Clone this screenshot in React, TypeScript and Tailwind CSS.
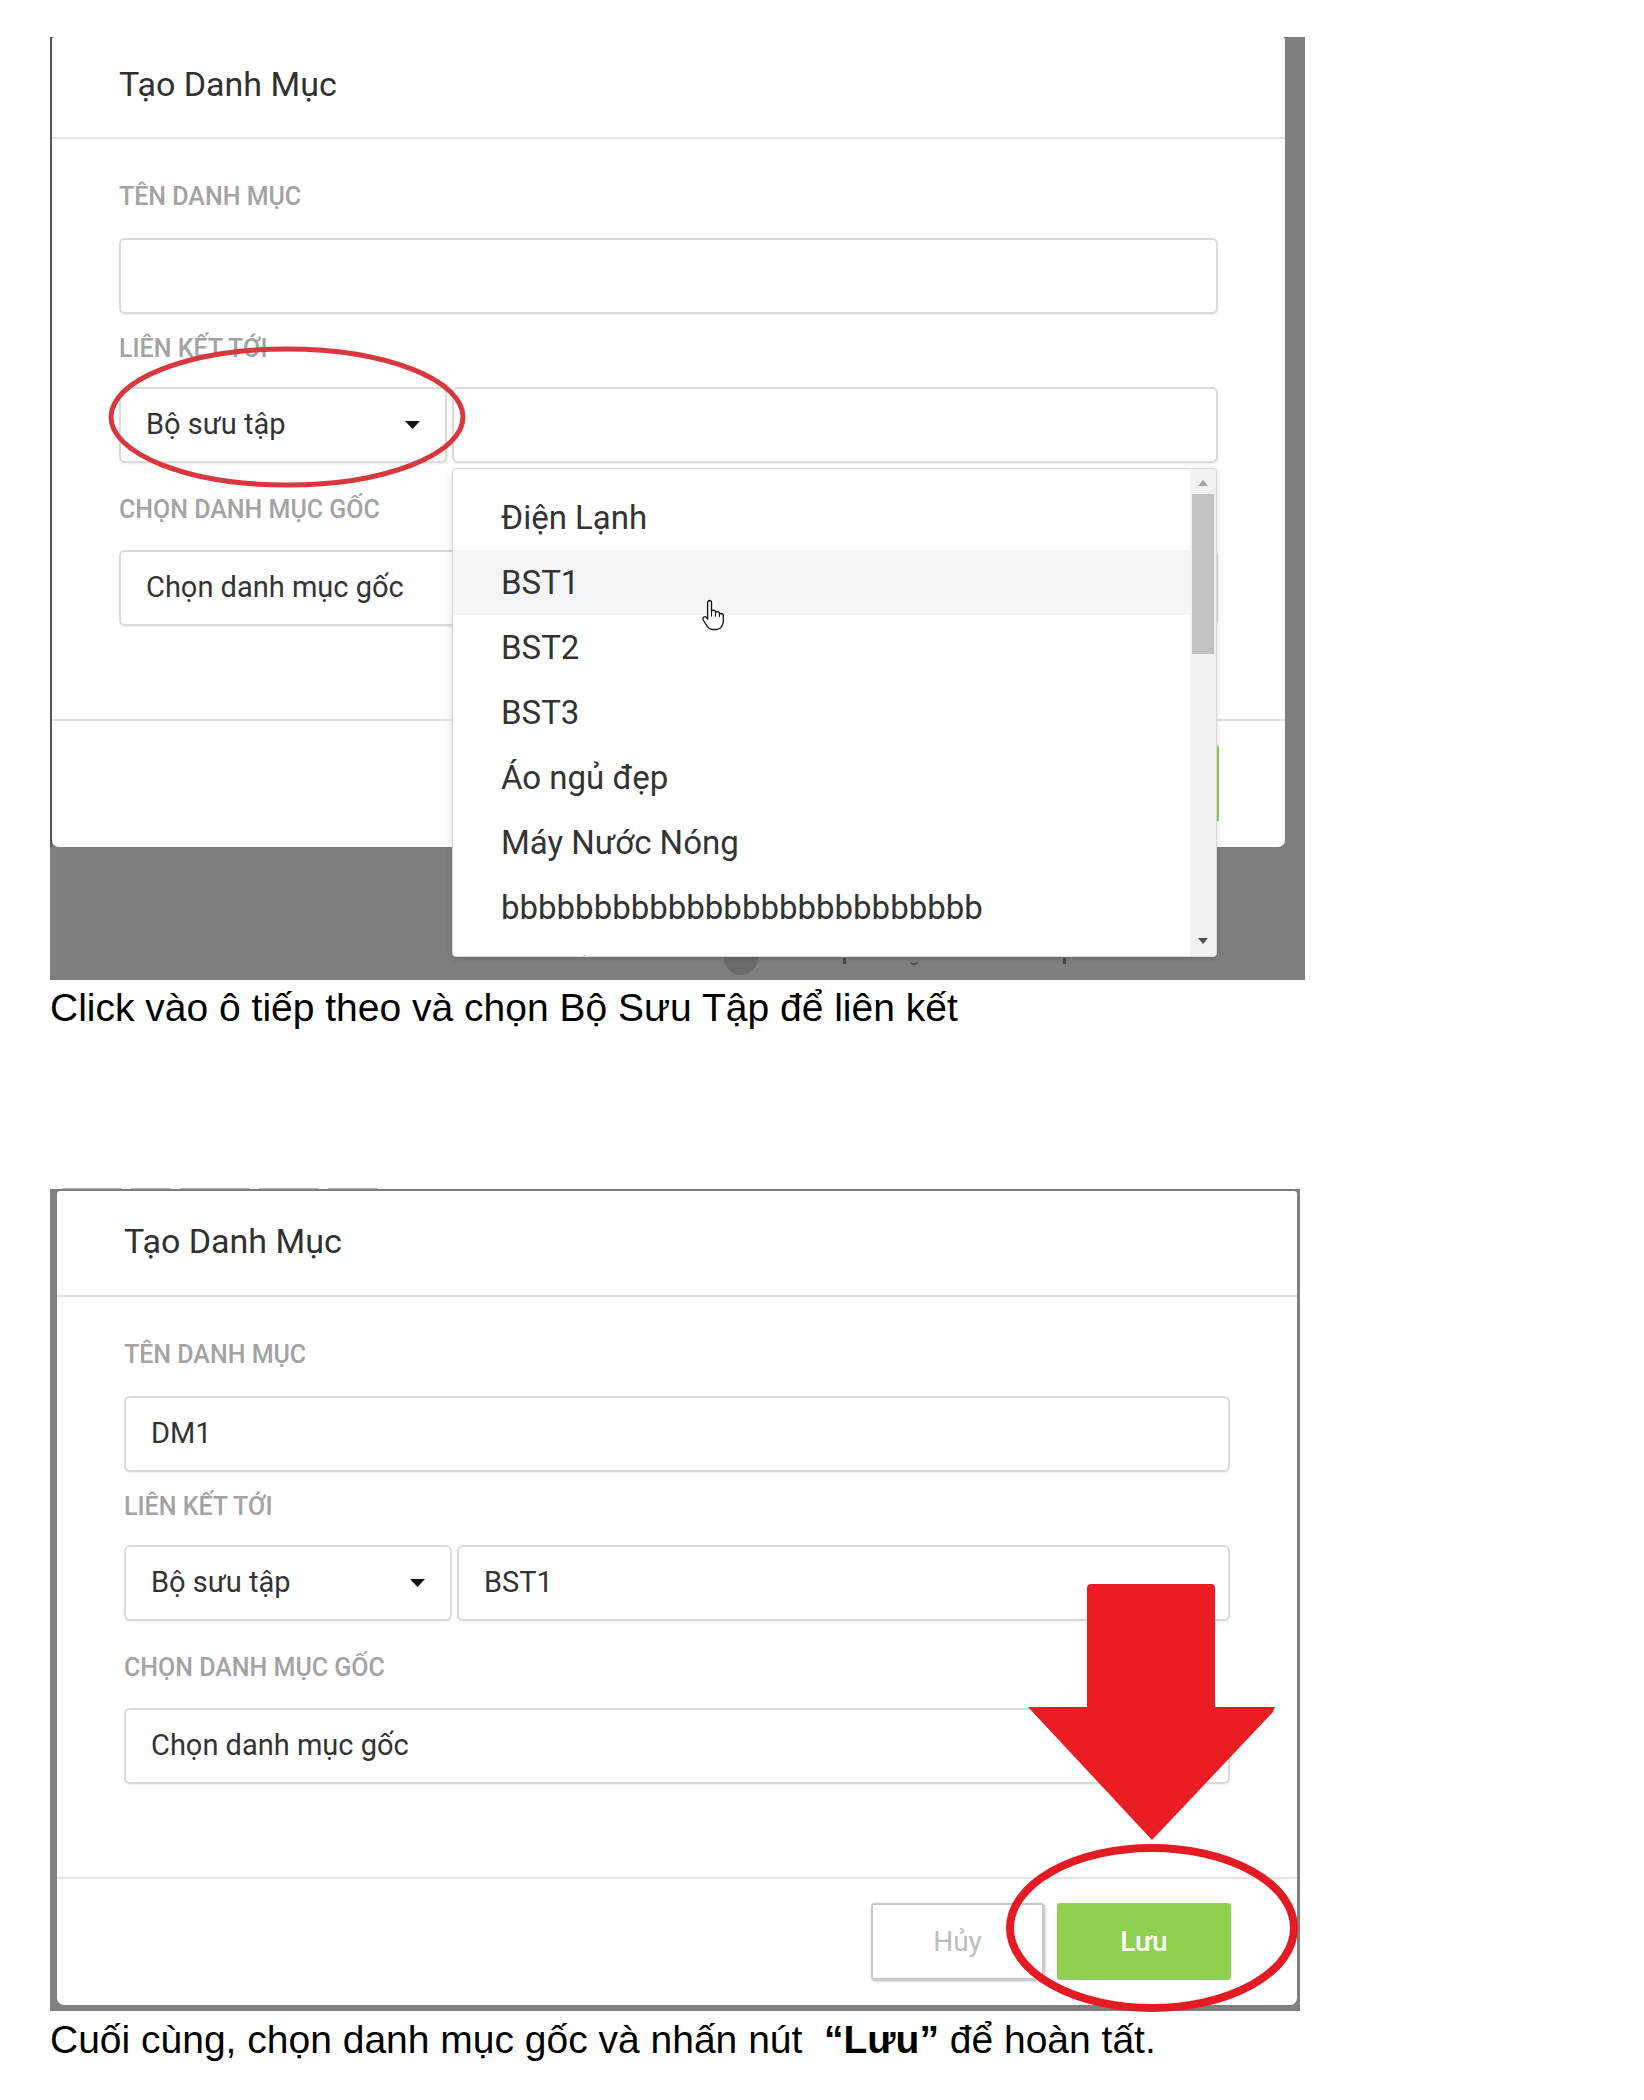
import React from "react";

const UI = "font-['Roboto',sans-serif]";
const CAP = "font-['Liberation_Sans',Arial,sans-serif]";

function Caret() {
  return (
    <svg width="15" height="8" viewBox="0 0 15 8" className="shrink-0">
      <path d="M0 0h15L7.5 8z" fill="#111" />
    </svg>
  );
}

function Label({ children, cls }: { children: React.ReactNode; cls: string }) {
  return (
    <div className={`${cls} text-[25px] leading-[28px] font-medium text-[#a3a3a3]`}>
      {children}
    </div>
  );
}

const box =
  "h-[76px] border-2 border-[#dadada] rounded-[6px] bg-white shadow-[0_1px_2px_rgba(0,0,0,0.08)] flex items-center pl-[25px] text-[29px] text-[#333]";

function Modal({ filled, w, tall }: { filled: boolean; w: string; tall: boolean }) {
  return (
    <div
      className={`${w} ${tall ? "h-[814px]" : "h-[810px]"} shrink-0 bg-white rounded-t-[3px] rounded-b-[7px] flex flex-col ${UI}`}
    >
      <div
        className={`${tall ? "h-[104px] pt-[30px]" : "h-[100px] pt-[27px]"} pl-[67px] text-[34px] leading-[40px] text-[#303030]`}
      >
        Tạo Danh Mục
      </div>
      <div className="h-[2px] bg-[#e3e3e3]" />
      <div className="h-[580px] px-[67px] pt-[44px] flex flex-col">
        <Label cls="">TÊN DANH MỤC</Label>
        <div className={`mt-[27px] ${box}`}>{filled ? "DM1" : ""}</div>
        <Label cls="mt-[21px]">LIÊN KẾT TỚI</Label>
        <div className="mt-[24px] flex gap-[5px]">
          <div className={`w-[328px] ${box} justify-between pr-[25px]`}>
            <span>Bộ sưu tập</span>
            <Caret />
          </div>
          <div className={`flex-1 ${box}`}>{filled ? "BST1" : ""}</div>
        </div>
        <Label cls="mt-[33px]">CHỌN DANH MỤC GỐC</Label>
        <div className={`mt-[26px] ${box}`}>Chọn danh mục gốc</div>
      </div>
      <div className="h-[2px] bg-[#e3e3e3]" />
      <div className="flex-1 flex justify-end gap-[13px] pt-[24px] pr-[66px]">
        <div className="w-[173px] h-[77px] border-2 border-[#c9c9c9] rounded-[3px] shadow-[1px_1px_3px_rgba(0,0,0,0.3)] flex items-center justify-center text-[28px] text-[#bdbdbd]">
          Hủy
        </div>
        <div className="w-[174px] h-[77px] rounded-[3px] bg-[#8fd14f] flex items-center justify-center text-[28px] text-white font-medium">
          Lưu
        </div>
      </div>
    </div>
  );
}

function Hand() {
  return (
    <svg width="24" height="33" viewBox="0 0 24 33">
      <path
        d="M8.5 2.5c1.1 0 2 .9 2 2v9.2c.3-.9 1.1-1.5 2-1.5 1.1 0 2 .9 2 2v.8c.3-.8 1.1-1.3 2-1.3 1.1 0 2 .9 2 2v.8c.3-.6 1-1 1.8-1 1.1 0 2 .9 2 2v5.5c0 4.5-2.8 8.5-6.5 8.5h-4.6c-2.2 0-3.6-1.1-4.8-2.9l-4.2-6.6c-.7-1.1-.4-2.4.6-3 1-.6 2.3-.2 2.9.8l.9 1.4V4.5c0-1.1.9-2 2-2z"
        fill="white"
        stroke="#111"
        strokeWidth="1.3"
        strokeLinejoin="round"
      />
      <path d="M10.5 14v4.5M14.5 15v3.5M18.5 16.3v2.7" stroke="#111" strokeWidth="1" />
    </svg>
  );
}

const items = [
  "Điện Lạnh",
  "BST1",
  "BST2",
  "BST3",
  "Áo ngủ đẹp",
  "Máy Nước Nóng",
  "bbbbbbbbbbbbbbbbbbbbbbbbbb",
  "Gỗ để bàn",
];

function Dropdown() {
  return (
    <div
      className={`absolute left-[402px] top-[431px] w-[765px] h-[489px] bg-white border border-[#d9d9d9] rounded-[4px] shadow-[0_2px_6px_rgba(0,0,0,0.15)] overflow-hidden flex ${UI}`}
    >
      <div className="flex-1 pt-[16px]">
        {items.map((t, i) => (
          <div
            key={i}
            className={`h-[65px] flex items-center pl-[48px] text-[33px] text-[#333] ${i === 1 ? "bg-[#f4f5f7]" : ""}`}
          >
            {t}
          </div>
        ))}
      </div>
      <div className="w-[26px] bg-[#f1f1f1] relative">
        <svg className="absolute left-[8px] top-[11px]" width="10" height="6" viewBox="0 0 10 6">
          <path d="M0 6h10L5 0z" fill="#a3a3a3" />
        </svg>
        <div className="absolute left-[2px] top-[25px] w-[22px] h-[160px] bg-[#c1c1c1]" />
        <svg className="absolute left-[8px] top-[469px]" width="10" height="6" viewBox="0 0 10 6">
          <path d="M0 0h10L5 6z" fill="#505050" />
        </svg>
      </div>
    </div>
  );
}

function Panel1() {
  return (
    <div className="relative w-[1255px] h-[943px] bg-[#7f7f7f] flex items-start">
      <div className="w-[2px] h-[810px] bg-[#555]" />
      <Modal filled={false} w="w-[1233px]" tall={false} />
      <div className="absolute left-[674px] top-[904px] w-[34px] h-[34px] rounded-full bg-[#6b6b6b]" />
      <div className="absolute left-[793px] top-[921px] w-[3px] h-[6px] bg-[#4a4a4a]" />
      <div className="absolute left-[860px] top-[921px] w-[8px] h-[7px] rounded-b-full border-b-2 border-[#4a4a4a]" />
      <div className="absolute left-[1013px] top-[921px] w-[3px] h-[6px] bg-[#4a4a4a]" />
      <Dropdown />
      <svg className="absolute left-[55px] top-[307px]" width="364" height="146" viewBox="0 0 364 146">
        <ellipse cx="182" cy="73" rx="176" ry="68" fill="none" stroke="#d8373d" strokeWidth="5" />
      </svg>
      <div className="absolute left-[651px] top-[561px]">
        <Hand />
      </div>
    </div>
  );
}

function Panel2() {
  return (
    <div className="relative w-[1250px] h-[822px] bg-[#7f7f7f] flex items-start pt-[2px]">
      <div className="w-[7px] shrink-0" />
      <Modal filled w="w-[1240px]" tall />
      <svg className="absolute left-[970px] top-[390px]" width="265" height="270" viewBox="0 0 265 270">
        <path d="M72 5h119q4 0 4 4V128H255l-2 5L132 261 8 128H67V9q0-4 5-4z" fill="#ec1c24" />
      </svg>
      <svg className="absolute left-[951px] top-[651px]" width="302" height="177" viewBox="0 0 302 177">
        <ellipse cx="151" cy="88" rx="142" ry="80" fill="none" stroke="#e41b23" strokeWidth="8" />
      </svg>
    </div>
  );
}

export default function App() {
  return (
    <div className="min-h-[2100px] w-full bg-white pl-[50px] pt-[37px]">
      <Panel1 />
      <p className={`mt-[5px] text-[39px] leading-[45px] text-black ${CAP}`}>
        Click vào ô tiếp theo và chọn Bộ Sưu Tập để liên kết
      </p>
      <div className="mt-[154px] h-[5px] ml-[12px] flex items-end gap-[9px]">
        <div className="w-[60px] h-[1px] bg-[#b5b5b5]" />
        <div className="w-[40px] h-[1px] bg-[#b5b5b5]" />
        <div className="w-[70px] h-[1px] bg-[#b5b5b5]" />
        <div className="w-[60px] h-[1px] bg-[#b5b5b5]" />
        <div className="w-[50px] h-[1px] bg-[#b5b5b5]" />
      </div>
      <Panel2 />
      <p className={`mt-[6px] text-[39px] leading-[45px] text-black ${CAP}`}>
        Cuối cùng, chọn danh mục gốc và nhấn nút&nbsp; <b>“Lưu”</b> để hoàn tất.
      </p>
    </div>
  );
}
